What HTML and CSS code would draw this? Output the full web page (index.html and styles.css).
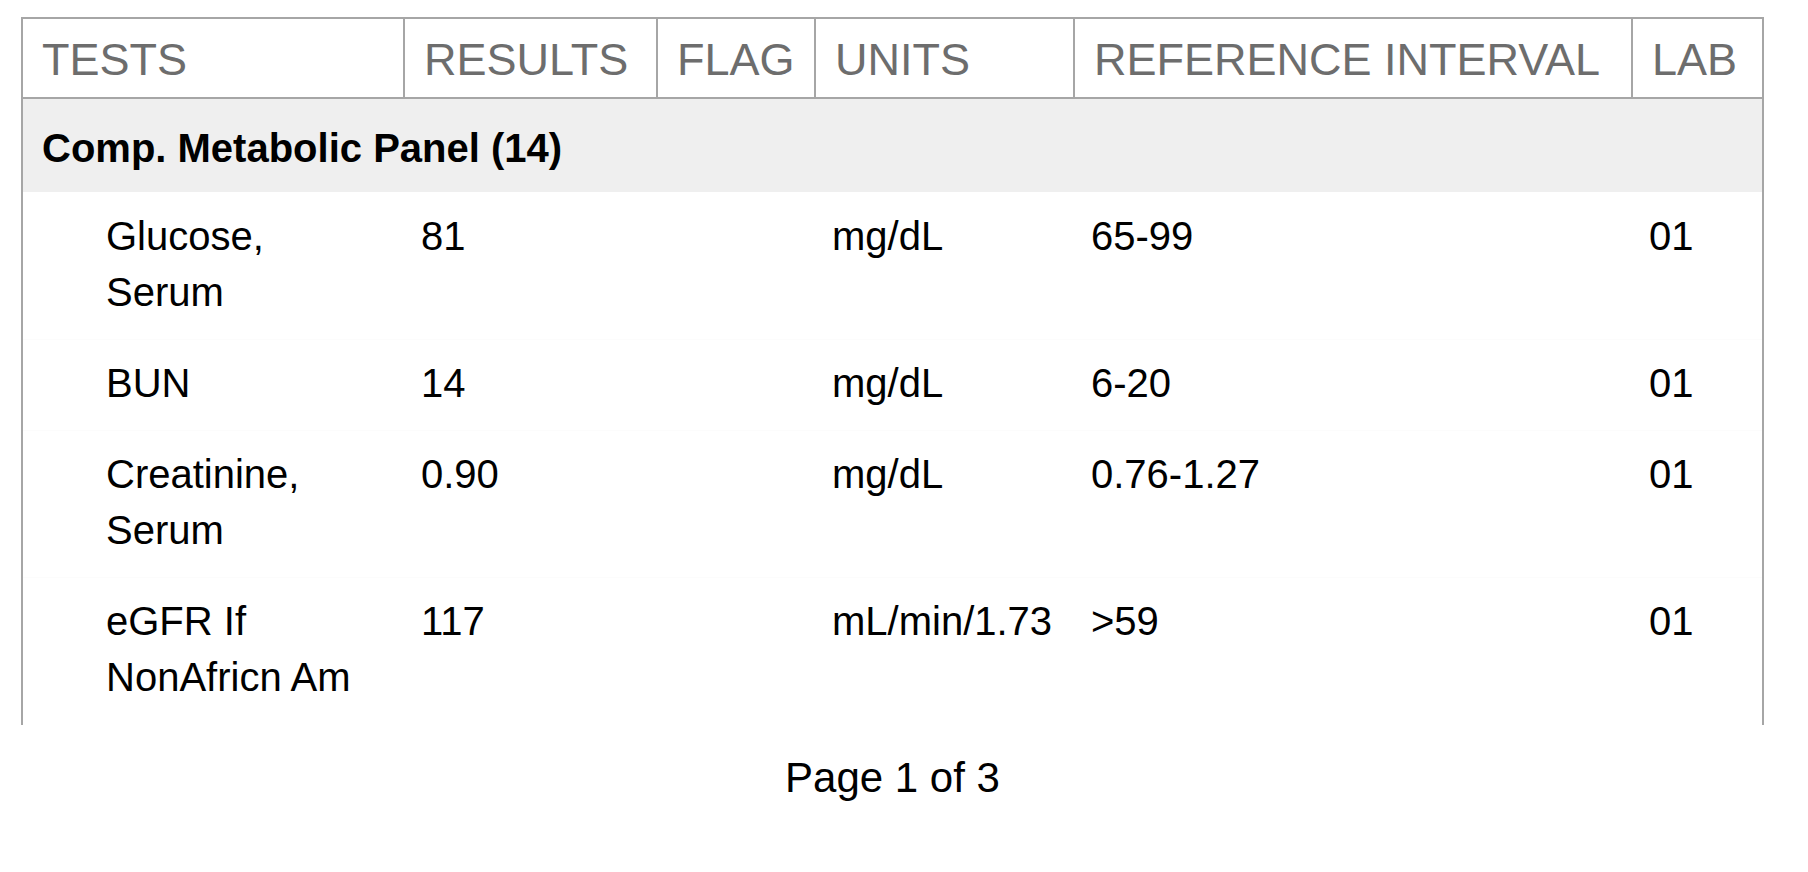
FILE: index.html
```html
<!DOCTYPE html>
<html lang="en">
<head>
<meta charset="utf-8">
<title>Lab Results</title>
<link rel="stylesheet" href="styles.css">
</head>
<body>
<main class="page">
  <div class="report">
    <div class="row head">
      <div class="hcell">TESTS</div>
      <div class="hcell">RESULTS</div>
      <div class="hcell">FLAG</div>
      <div class="hcell">UNITS</div>
      <div class="hcell">REFERENCE INTERVAL</div>
      <div class="hcell">LAB</div>
    </div>
    <div class="section">Comp. Metabolic Panel (14)</div>
    <div class="row item">
      <div class="cell name">Glucose, Serum</div>
      <div class="cell">81</div>
      <div class="cell"></div>
      <div class="cell">mg/dL</div>
      <div class="cell">65-99</div>
      <div class="cell">01</div>
    </div>
    <div class="row item">
      <div class="cell name">BUN</div>
      <div class="cell">14</div>
      <div class="cell"></div>
      <div class="cell">mg/dL</div>
      <div class="cell">6-20</div>
      <div class="cell">01</div>
    </div>
    <div class="row item">
      <div class="cell name">Creatinine, Serum</div>
      <div class="cell">0.90</div>
      <div class="cell"></div>
      <div class="cell">mg/dL</div>
      <div class="cell">0.76-1.27</div>
      <div class="cell">01</div>
    </div>
    <div class="row item last">
      <div class="cell name">eGFR If NonAfricn Am</div>
      <div class="cell">117</div>
      <div class="cell"></div>
      <div class="cell">mL/min/1.73</div>
      <div class="cell">&gt;59</div>
      <div class="cell">01</div>
    </div>
  </div>
  <div class="pager">Page 1 of 3</div>
</main>
</body>
</html>
```
FILE: styles.css
```css
html, body {
  margin: 0;
  padding: 0;
  background: #ffffff;
}

body {
  font-family: "Liberation Sans", Arial, Helvetica, sans-serif;
  color: #000000;
}

.page {
  padding: 17px 0 0 21px;
}

.report {
  width: 1743px;
  box-sizing: border-box;
  border: 2px solid #a6a6a6;
  border-bottom: none;
}

.row {
  display: grid;
  grid-template-columns: 380px 253px 158px 259px 558px 131px;
}

.head {
  border-bottom: 2px solid #a6a6a6;
}

.hcell {
  box-sizing: border-box;
  font-size: 45px;
  line-height: 74px;
  height: 78px;
  padding: 4px 0 0 19px;
  color: #6d6d6d;
  white-space: nowrap;
  overflow: hidden;
}

.hcell + .hcell {
  border-left: 2px solid #a6a6a6;
}

.section {
  box-sizing: border-box;
  height: 93px;
  background: #efefef;
  font-weight: bold;
  font-size: 40px;
  line-height: 56px;
  padding: 21px 18px 16px 19px;
  white-space: nowrap;
}

.item + .item {
  border-top: 1px solid #fcfcfc;
}

.cell {
  box-sizing: border-box;
  font-size: 40px;
  line-height: 56px;
  padding: 16px 6px 19px 18px;
  color: #000000;
}

.item + .item .cell {
  padding-top: 15px;
}

.cell.name {
  padding-left: 83px;
  padding-right: 20px;
}

.item.last .cell {
  padding-bottom: 20px;
}

.pager {
  width: 1743px;
  margin-top: 28px;
  text-align: center;
  font-size: 42px;
  line-height: 50px;
  color: #000000;
}
```
